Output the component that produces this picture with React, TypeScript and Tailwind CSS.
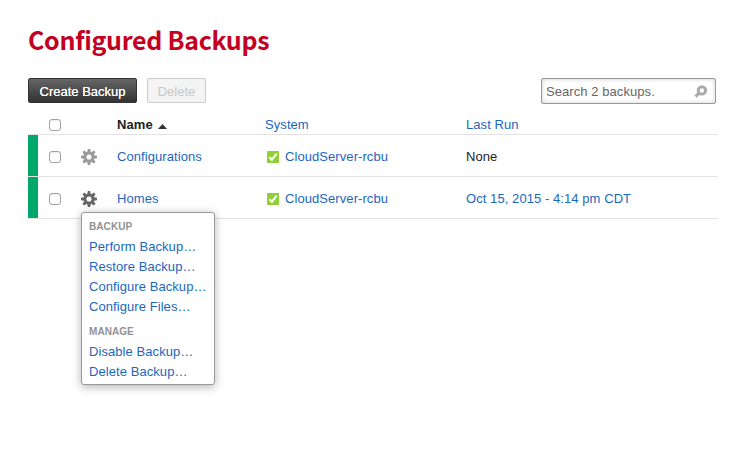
import React from "react";

function Gear({ color }: { color: string }) {
  return (
    <svg width="16" height="16" viewBox="-8 -8 16 16" className="block">
      <circle r="4.05" fill="none" stroke={color} strokeWidth="3" />
      {[0, 45, 90, 135, 180, 225, 270, 315].map((a) => (
        <path key={a} d="M-1.7 -5L-1.2 -8H1.2L1.7 -5Z" fill={color} transform={`rotate(${a})`} />
      ))}
    </svg>
  );
}

function Check() {
  return (
    <svg width="12" height="12" viewBox="0 0 12 12" className="block">
      <rect width="12" height="12" rx="0.7" fill="#8fd036" />
      <path d="M2.4 6.3L4.8 8.8L9.6 2.7" fill="none" stroke="#fff" strokeWidth="2.1" />
    </svg>
  );
}

function Box() {
  return <span className="block h-3 w-3 rounded-[3px] border border-[#a0a0a0] bg-white shadow-[inset_0_1px_1px_#eee]" />;
}

function Row({ name, gear, run, link }: { name: string; gear: string; run: string; link?: boolean }) {
  return (
    <div className="flex h-[42px] items-center border-b border-[#e3e3e3]">
      <div className="h-full w-[10px] bg-[#00a86b]" />
      <div className="ml-[11px] mt-[3px] w-8"><Box /></div>
      <div className="mt-[3px] w-9"><Gear color={gear} /></div>
      <a className="mt-[2px] w-[150px] text-[#1d66be]">{name}</a>
      <div className="mt-[3px] w-[18px]"><Check /></div>
      <a className="mt-[2px] w-[181px] text-[#1d66be]">CloudServer-rcbu</a>
      <span className={link ? "mt-[2px] text-[#1d66be]" : "mt-[2px] text-[#222]"}>{run}</span>
    </div>
  );
}

function MenuGroup({ title, items }: { title: string; items: string[] }) {
  return (
    <div className="mb-[5px]">
      <div className="h-5 text-[10px] font-bold leading-5 text-[#929292]">{title}</div>
      {items.map((t) => (
        <a key={t} className="block h-5 whitespace-nowrap leading-5 text-[#1d66be]">{t}</a>
      ))}
    </div>
  );
}

export default function App() {
  return (
    <div className="h-[451px] w-[747px] overflow-hidden bg-white pl-7 pt-[18px] font-['Liberation_Sans',Arial,sans-serif] text-[13px] leading-4 tracking-[0.07px]">
      <h1 className="h-[60px] whitespace-nowrap font-['Noto_Sans_CJK_SC',sans-serif] text-[25px] font-bold leading-[42px] tracking-[-0.3px] text-[#c40022]">
        Configured Backups
      </h1>
      <div className="flex h-[26px] w-[688px] items-start">
        <button className="h-[25px] w-[109px] whitespace-nowrap rounded-[2px] border border-[#333] bg-linear-to-b from-[#666] to-[#333] pt-[2px] tracking-[0] text-white [text-shadow:0_0_0.5px_#fff]">
          Create Backup
        </button>
        <button className="ml-[10px] h-[25px] w-[59px] rounded-[2px] border border-[#ccc] bg-[#f4f4f4] pt-[2px] tracking-[0] text-[#c8c8c8]">Delete</button>
        <div className="ml-auto flex h-[26px] w-[175px] items-center justify-between rounded-[2px] border border-[#999] pl-1 pr-[8px] text-[#666] shadow-[inset_0_0_4px_#ccc]">
          <span className="pt-px">Search 2 backups.</span>
          <svg width="13" height="13" viewBox="0 0 13 13" className="block">
            <circle cx="7.9" cy="5.4" r="3.7" fill="none" stroke="#aaa" strokeWidth="2.9" />
            <path d="M5 8.2L1.6 11.6" stroke="#aaa" strokeWidth="3.2" />
          </svg>
        </div>
      </div>
      <div className="relative w-[690px]">
        <div className="flex h-[31px] items-end border-b border-[#e3e3e3] pb-px">
          <div className="mb-[2px] ml-[21px] w-[68px]"><Box /></div>
          <div className="flex w-[148px] items-center font-bold text-[#222]">
            Name
            <svg width="9" height="5" viewBox="0 0 9 5" className="ml-[5px] mt-[2px]"><path d="M0 5L4.5 0L9 5Z" fill="#333" /></svg>
          </div>
          <a className="w-[201px] text-[#1d66be]">System</a>
          <a className="text-[#1d66be]">Last Run</a>
        </div>
        <Row name="Configurations" gear="#999" run="None" />
        <Row name="Homes" gear="#666" run="Oct 15, 2015 - 4:14 pm CDT" link />
        <div className="absolute left-[53px] top-[108px] h-[173px] w-[134px] rounded-[3px] border border-[#999] bg-white pl-[7px] pt-1 shadow-[0_2px_10px_rgba(0,0,0,0.3)]">
          <MenuGroup title="BACKUP" items={["Perform Backup…", "Restore Backup…", "Configure Backup…", "Configure Files…"]} />
          <MenuGroup title="MANAGE" items={["Disable Backup…", "Delete Backup…"]} />
        </div>
      </div>
    </div>
  );
}
